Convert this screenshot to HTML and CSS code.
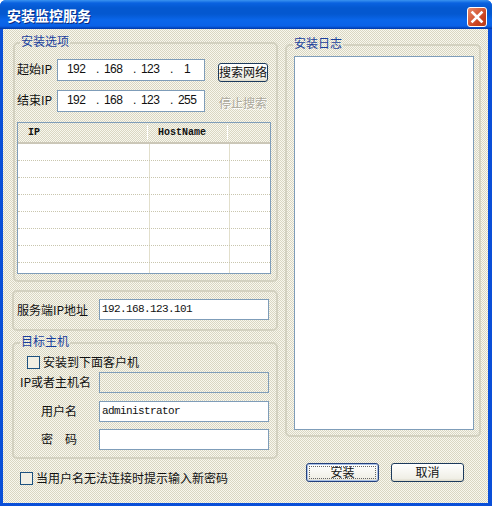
FILE: index.html
```html
<!DOCTYPE html>
<html lang="zh-CN">
<head>
    <meta charset="UTF-8">
    <title>安装监控服务</title>
    <link rel="stylesheet" href="styles.css">
</head>
<body>
    <div class="window">
        <div class="titlebar">
            <span class="title">安装监控服务</span>
            <div class="close">
                <svg width="16" height="16" viewBox="0 0 16 16"><path d="M3.5 3.5 L12.5 12.5 M12.5 3.5 L3.5 12.5" stroke="#fff" stroke-width="2.6" stroke-linecap="square"/></svg>
            </div>
        </div>
        <div class="content">
            <div class="left">
                <fieldset class="group options">
                    <legend>安装选项</legend>
                    <div class="ip-row">
                        <label class="ip-label">起始IP</label>
                        <div class="ip-box"><span>192</span><i>.</i><span>168</span><i>.</i><span>123</span><i>.</i><span>1</span></div>
                        <button class="btn small">搜索网络</button>
                    </div>
                    <div class="ip-row second">
                        <label class="ip-label">结束IP</label>
                        <div class="ip-box"><span>192</span><i>.</i><span>168</span><i>.</i><span>123</span><i>.</i><span>255</span></div>
                        <button class="btn small disabled">停止搜索</button>
                    </div>
                    <div class="list">
                        <div class="list-head">
                            <div class="col-ip">IP</div>
                            <div class="col-host">HostName</div>
                            <div class="col-rest"></div>
                        </div>
                        <div class="list-body">
                            <div class="list-row"></div>
                            <div class="list-row"></div>
                            <div class="list-row"></div>
                            <div class="list-row"></div>
                            <div class="list-row"></div>
                            <div class="list-row"></div>
                            <div class="list-row"></div>
                            <div class="list-row last"></div>
                        </div>
                    </div>
                </fieldset>
                <div class="group server">
                    <label class="server-label">服务端IP地址</label>
                    <div class="text-box mono">192.168.123.101</div>
                </div>
                <fieldset class="group target">
                    <legend>目标主机</legend>
                    <div class="check-row">
                        <span class="check"></span>
                        <span class="check-text">安装到下面客户机</span>
                    </div>
                    <div class="form-row">
                        <label class="host-label">IP或者主机名</label>
                        <div class="text-box readonly"></div>
                    </div>
                    <div class="form-row user">
                        <label class="user-label">用户名</label>
                        <div class="text-box mono">administrator</div>
                    </div>
                    <div class="form-row pass">
                        <label class="user-label">密　码</label>
                        <div class="text-box"></div>
                    </div>
                </fieldset>
                <div class="check-row prompt">
                    <span class="check"></span>
                    <span class="check-text">当用户名无法连接时提示输入新密码</span>
                </div>
            </div>
            <div class="right">
                <fieldset class="group log">
                    <legend>安装日志</legend>
                    <div class="log-box"></div>
                </fieldset>
                <div class="actions">
                    <button class="btn wide default">安装</button>
                    <button class="btn wide">取消</button>
                </div>
            </div>
        </div>
    </div>
</body>
</html>
```

FILE: styles.css
```css
* {
    box-sizing: border-box;
}
body {
    margin: 0;
    background: #fff;
    font-family: "Noto Sans CJK SC", "Liberation Sans", sans-serif;
    font-size: 12px;
    color: #111;
}
.window {
    width: 492px;
    height: 506px;
    display: flex;
    flex-direction: column;
    background: #0a4fd8;
    border-radius: 6px 6px 0 0;
    overflow: hidden;
}
.titlebar {
    height: 29px;
    flex: none;
    display: flex;
    align-items: center;
    justify-content: space-between;
    padding: 0 5px 0 7px;
    background: linear-gradient(#3a93f0 0, #0a62e0 3px, #0458d0 8px, #0458d0 14px, #0a66ea 20px, #0a62e8 26px, #0038a8 29px);
}
.title {
    color: #fff;
    font-size: 14px;
    font-weight: 700;
    text-shadow: 1px 1px 0 #0a2a80;
}
.close {
    width: 20px;
    height: 20px;
    display: flex;
    align-items: center;
    justify-content: center;
    margin-top: 5px;
    background: linear-gradient(135deg, #e88a6a, #c9401c 70%, #b8401e);
    border: 1px solid #fff;
    border-radius: 3px;
}
.content {
    flex: 1;
    display: flex;
    margin: 0 4px 3px 3px;
    padding: 4px 0 0 9px;
    background-color: #ece9d8;
    background-image: conic-gradient(#f8f7ee 25%, #d9d6c2 0 50%, #f8f7ee 0 75%, #d9d6c2 0);
    background-size: 2px 2px;
}
.left {
    width: 266px;
    flex: none;
}
.right {
    width: 196px;
    flex: none;
    margin-left: 7px;
}
.group {
    margin: 0;
    padding: 0;
    border: 2px solid #d3d1c0;
    border-radius: 5px;
    min-width: 0;
}
legend {
    margin-left: 3px;
    padding: 0 1px 4px;
    color: #1a3f9c;
    font-size: 12px;
    line-height: 15px;
}
.options {
    width: 265px;
    height: 249px;
    margin-left: 1px;
    padding: 7px 4px 0 2px;
}
.ip-row {
    display: flex;
    height: 22px;
}
.ip-row.second {
    margin-top: 9px;
}
.ip-label {
    width: 40px;
    flex: none;
    line-height: 19px;
}
.ip-box {
    width: 148px;
    height: 22px;
    flex: none;
    display: flex;
    align-items: center;
    padding: 0 0 2px 9px;
    background: #fff;
    border: 1px solid #7f9db9;
    font-family: "Liberation Sans", sans-serif;
    font-size: 12px;
    letter-spacing: -0.6px;
}
.ip-box span {
    width: 18px;
    text-align: center;
}
.ip-box i {
    width: 19px;
    padding-left: 11px;
    font-style: normal;
}
.btn {
    padding: 0 0 2px;
    font-family: inherit;
    background: linear-gradient(#fff, #f0efe6 85%, #dcd8c8);
    border: 1px solid #1c3a5c;
    border-radius: 3px;
    color: #111;
}
.btn.small {
    width: 50px;
    height: 19px;
    margin: 4px 0 0 13px;
    font-size: 12px;
    line-height: 15px;
}
.btn.disabled {
    background: transparent;
    border-color: transparent;
    color: #aaa79a;
    text-shadow: 1px 1px 0 #fff;
}
.list {
    width: 254px;
    height: 152px;
    margin-top: 10px;
    background: #fff;
    border: 1px solid #7f9db9;
    overflow: hidden;
}
.list-head {
    display: flex;
    height: 21px;
    padding-left: 1px;
    border-bottom: 2px solid #cbc7b8;
    font-family: "Liberation Mono", monospace;
    font-size: 10px;
    font-weight: 700;
    background-color: #ece9d8;
    background-image: conic-gradient(#f8f7ee 25%, #d9d6c2 0 50%, #f8f7ee 0 75%, #d9d6c2 0);
    background-size: 2px 2px;
}
.col-ip,
.col-host {
    height: 15px;
    margin-top: 2px;
    line-height: 15px;
    border-right: 1px solid #fff;
}
.col-ip {
    width: 129px;
    padding-left: 9px;
}
.col-host {
    width: 80px;
    padding-left: 10px;
}
.list-body {
    height: 129px;
    background: linear-gradient(#e2dfcc, #e2dfcc) 131px 0 / 1px 100% no-repeat,
        linear-gradient(#e2dfcc, #e2dfcc) 211px 0 / 1px 100% no-repeat;
}
.list-row {
    height: 17px;
    border-bottom: 1px dotted #c9c6ae;
}
.list-row.last {
    border-bottom: none;
}
.server {
    height: 41px;
    margin-top: 8px;
    display: flex;
    align-items: center;
    padding: 0 7px 2px 3px;
}
.server-label {
    width: 82px;
    flex: none;
}
.text-box {
    width: 170px;
    height: 21px;
    flex: none;
    background: #fff;
    border: 1px solid #7f9db9;
    padding-left: 2px;
    line-height: 19px;
}
.text-box.readonly {
    background: transparent;
}
.mono {
    font-family: "Liberation Mono", monospace;
    font-size: 11px;
    letter-spacing: -0.6px;
}
.target {
    height: 126px;
    margin-top: 2px;
    padding: 0 7px 0 3px;
}
.check-row {
    display: flex;
    align-items: center;
    gap: 3px;
    height: 14px;
    margin: 3px 0 0 10px;
}
.check-text {
    padding-bottom: 2px;
}
.check {
    width: 13px;
    height: 13px;
    flex: none;
    background: #f1efe4;
    border: 1px solid #1c5180;
}
.form-row {
    display: flex;
    align-items: center;
    justify-content: space-between;
    margin-top: 3px;
}
.form-row.user {
    margin-top: 8px;
}
.form-row.pass {
    margin-top: 7px;
}
.host-label {
    padding: 0 0 3px 3px;
    white-space: nowrap;
}
.user-label {
    padding: 0 0 3px 24px;
}
.check-row.prompt {
    margin: 12px 0 0 8px;
}
.log {
    height: 402px;
    margin-top: 2px;
    padding: 2px 0 0 7px;
}
.log legend {
    margin-left: -1px;
}
.log-box {
    width: 180px;
    height: 374px;
    background: #fff;
    border: 1px solid #7f9db9;
}
.actions {
    display: flex;
    gap: 12px;
    margin: 26px 0 0 21px;
}
.btn.wide {
    width: 73px;
    height: 19px;
    font-size: 12px;
    line-height: 15px;
}
.btn.default {
    border-color: #24407c;
    box-shadow: inset 0 0 0 1px #a9c0e6;
    outline: 1px dotted #666;
    outline-offset: -4px;
}
```
